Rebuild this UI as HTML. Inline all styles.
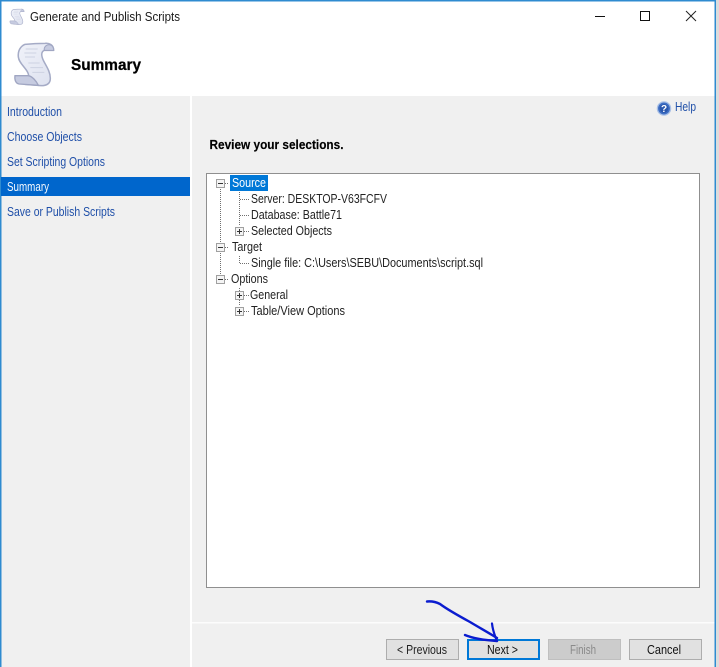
<!DOCTYPE html>
<html><head><meta charset="utf-8"><title>Generate and Publish Scripts</title>
<style>
html,body{margin:0;padding:0;background:#fff;width:719px;height:667px;overflow:hidden}
svg{display:block;font-family:"Liberation Sans",sans-serif;font-size:12.5px;filter:blur(0.3px)}
</style></head><body>
<svg width="719" height="667" viewBox="0 0 719 667" xmlns="http://www.w3.org/2000/svg">
<defs>
<linearGradient id="pg" x1="0" y1="0" x2="1" y2="1"><stop offset="0" stop-color="#f0f2f9"/><stop offset="1" stop-color="#dde1ef"/></linearGradient>
<g id="scroll">
<path d="M60 28 C80 26 100 25 120 25 C132 24 146 28 146 46 L118 46 C108 50 108 62 116 78 C124 94 136 110 136 130 C136 146 126 152 108 152 L60 148 C72 136 74 124 68 112 C60 96 42 84 40 66 C38 48 46 34 60 28 Z" fill="url(#pg)" stroke="#a5abc6" stroke-width="4.500" stroke-linejoin="round"/>
<path d="M30 122 L70 122 C82 124 94 138 100 151 L42 147 C32 145 28 134 30 122 Z" fill="#c6cbe0" stroke="#a0a6c2" stroke-width="4"/>
<path d="M118 46 C116 38 122 30 132 29 C142 30 146 38 146 46 Z" fill="#c6cbe0" stroke="#a0a6c2" stroke-width="3"/>
<path d="M62 42 H98 M58 54 H94 M60 66 H90 M70 84 H104 M76 98 H114 M82 112 H118" stroke="#cdd2e2" stroke-width="3" fill="none"/>
</g>
<g id="plus"><rect x="0.5" y="0.5" width="8" height="8" fill="#f4f4f4" stroke="#a0a0a0"/><path d="M2 4.5H7M4.5 2V7" stroke="#333" stroke-width="1"/></g>
<g id="minus"><rect x="0.5" y="0.5" width="8" height="8" fill="#f4f4f4" stroke="#a0a0a0"/><path d="M2 4.5H7" stroke="#333" stroke-width="1"/></g>
</defs>

<!-- backdrop and window -->
<rect width="719" height="667" fill="#dcdcdc"/>
<rect x="0" y="0" width="716" height="667" fill="#fff"/>
<rect x="1" y="96" width="189" height="571" fill="#f0f0f0"/>
<rect x="192" y="96" width="523" height="571" fill="#f0f0f0"/>
<rect x="192" y="622" width="523" height="1.5" fill="#fcfcfc"/>
<rect x="0" y="0" width="1.5" height="667" fill="#2f8bd0"/>
<rect x="0" y="0" width="716" height="1.5" fill="#2f8bd0"/>
<rect x="714.5" y="0" width="1.5" height="667" fill="#2f8bd0"/>

<!-- title bar -->
<use href="#scroll" transform="translate(6.3,6) scale(0.122)"/>
<text x="30" y="21" textLength="150" lengthAdjust="spacingAndGlyphs" fill="#1a1a1a">Generate and Publish Scripts</text>
<path d="M595 16.5H605" stroke="#111" stroke-width="1"/>
<rect x="640.5" y="11.5" width="9" height="9" fill="none" stroke="#111" stroke-width="1"/>
<path d="M686 11L696 21M696 11L686 21" stroke="#222" stroke-width="1" fill="none"/>

<!-- header -->
<use href="#scroll" transform="translate(5,35) scale(0.3333)"/>
<text x="71" y="70" textLength="70" lengthAdjust="spacingAndGlyphs" font-size="16" font-weight="bold" fill="#000" stroke="#000" stroke-width="0.25">Summary</text>

<!-- navigation -->
<g fill="#1f4fa8">
<text x="7" y="116" textLength="55" lengthAdjust="spacingAndGlyphs">Introduction</text>
<text x="7" y="141" textLength="75" lengthAdjust="spacingAndGlyphs">Choose Objects</text>
<text x="7" y="166" textLength="98" lengthAdjust="spacingAndGlyphs">Set Scripting Options</text>
<text x="7" y="216" textLength="108" lengthAdjust="spacingAndGlyphs">Save or Publish Scripts</text>
</g>
<rect x="1" y="177" width="189" height="19" fill="#0066cc"/>
<text x="7" y="191" textLength="42" lengthAdjust="spacingAndGlyphs" fill="#f4f8fd">Summary</text>

<!-- help -->
<circle cx="664" cy="108.5" r="6.6" fill="#3f6fc4" stroke="#a9c0e6" stroke-width="1.3"/>
<circle cx="664" cy="108.5" r="4.4" fill="#2a57ad"/>
<text x="664" y="112" text-anchor="middle" font-size="10" font-weight="bold" fill="#fff">?</text>
<text x="675" y="111" textLength="21" lengthAdjust="spacingAndGlyphs" font-size="13" fill="#1f4fa8">Help</text>

<text x="209.500" y="149" textLength="134" lengthAdjust="spacingAndGlyphs" font-weight="bold" fill="#000" stroke="#000" stroke-width="0.15">Review your selections.</text>

<!-- tree box -->
<rect x="206.500" y="173.500" width="493" height="414" fill="#fff" stroke="#8f8f8f"/>

<!-- tree lines -->
<g stroke="#707070" stroke-width="1" stroke-dasharray="1 1" fill="none">
<path d="M220.500 187V274"/>
<path d="M239.500 192V226"/>
<path d="M239.500 256V263"/>
<path d="M239.500 288V306"/>
<path d="M225 183.500H229"/>
<path d="M225 247.500H229"/>
<path d="M225 279.500H229"/>
<path d="M240 199.500H250"/>
<path d="M240 215.500H250"/>
<path d="M244 231.500H250"/>
<path d="M240 263.500H250"/>
<path d="M244 295.500H250"/>
<path d="M244 311.500H250"/>
</g>
<use href="#minus" x="216" y="179"/>
<use href="#minus" x="216" y="243"/>
<use href="#minus" x="216" y="275"/>
<use href="#plus" x="235" y="227"/>
<use href="#plus" x="235" y="291"/>
<use href="#plus" x="235" y="307"/>

<rect x="230" y="175" width="38" height="16" fill="#0078d7"/>
<text x="232" y="187" textLength="34" lengthAdjust="spacingAndGlyphs" fill="#fff">Source</text>
<g fill="#222">
<text x="251" y="203" textLength="136" lengthAdjust="spacingAndGlyphs">Server: DESKTOP-V63FCFV</text>
<text x="251" y="219" textLength="91" lengthAdjust="spacingAndGlyphs">Database: Battle71</text>
<text x="251" y="235" textLength="81" lengthAdjust="spacingAndGlyphs">Selected Objects</text>
<text x="232" y="251" textLength="30" lengthAdjust="spacingAndGlyphs">Target</text>
<text x="251" y="267" textLength="232" lengthAdjust="spacingAndGlyphs">Single file: C:\Users\SEBU\Documents\script.sql</text>
<text x="231" y="283" textLength="37" lengthAdjust="spacingAndGlyphs">Options</text>
<text x="250" y="299" textLength="38" lengthAdjust="spacingAndGlyphs">General</text>
<text x="251" y="315" textLength="94" lengthAdjust="spacingAndGlyphs">Table/View Options</text>
</g>

<!-- buttons -->
<rect x="386.500" y="639.500" width="72" height="20" fill="#e1e1e1" stroke="#adadad"/>
<text x="397" y="654" textLength="50" lengthAdjust="spacingAndGlyphs" fill="#222">&lt; Previous</text>
<rect x="468" y="640" width="71" height="19" fill="#e1e1e1" stroke="#0078d7" stroke-width="2"/>
<text x="487" y="654" textLength="31" lengthAdjust="spacingAndGlyphs" fill="#111">Next &gt;</text>
<rect x="548.500" y="639.500" width="72" height="20" fill="#cccccc" stroke="#bfbfbf"/>
<text x="570" y="654" textLength="26" lengthAdjust="spacingAndGlyphs" fill="#8a8a8a">Finish</text>
<rect x="629.500" y="639.500" width="72" height="20" fill="#e1e1e1" stroke="#adadad"/>
<text x="647" y="654" textLength="34" lengthAdjust="spacingAndGlyphs" fill="#111">Cancel</text>

<!-- hand-drawn arrow -->
<g fill="none" stroke="#0b1ccf" stroke-linecap="round" stroke-linejoin="round">
<path d="M427 601.500C432 601 436 602 440 604C448 610 459 616 470 622C480 628 489 633 497 638" stroke-width="2.400"/>
<path d="M465 635C472 638 482 640 497 641" stroke-width="2.400"/>
<path d="M492 623.500C492.500 628 494 634 497 641" stroke-width="2.200"/>
</g>
</svg>
</body></html>
